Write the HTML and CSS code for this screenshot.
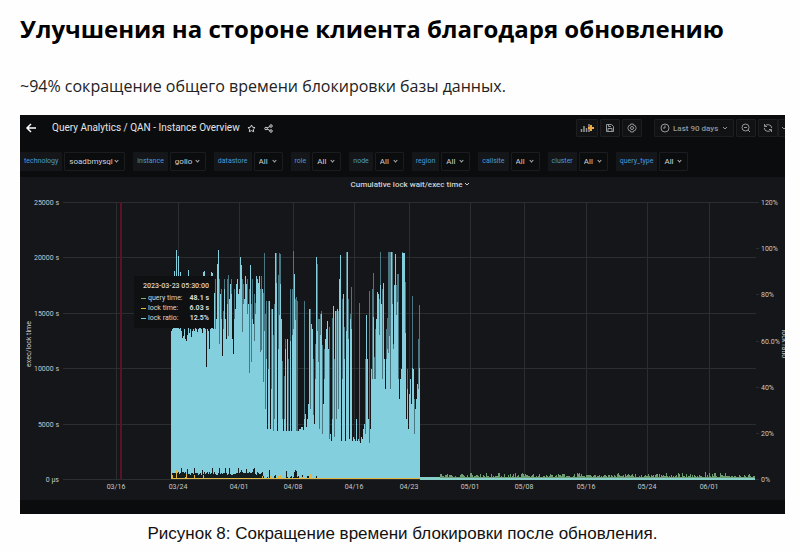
FILE: index.html
```html
<!DOCTYPE html>
<html lang="ru">
<head>
    <meta charset="UTF-8">
    <title>Улучшения на стороне клиента</title>
    <link rel="stylesheet" href="styles.css">
</head>
<body>
    <h1>Улучшения на стороне клиента благодаря обновлению</h1>
    <p class="lead">~94% сокращение общего времени блокировки базы данных.</p>

    <figure>
        <div class="dashboard">
            <div class="toolbar">
                <button class="icon-btn back" aria-label="Back">
                    <svg width="12" height="12" viewBox="0 0 12 12"><path d="M11 6H2M6 2L2 6l4 4" stroke-width="1.500"/></svg>
                </button>
                <h2>Query Analytics / QAN - Instance Overview</h2>
                <button class="icon-btn" aria-label="Star">
                    <svg width="9" height="9" viewBox="0 0 18 18"><path d="M9 2l2.200 4.500 4.900.7-3.500 3.400.8 4.900L9 13.200l-4.400 2.300.8-4.900L1.900 7.200l4.900-.7z" stroke-width="2"/></svg>
                </button>
                <button class="icon-btn" aria-label="Share">
                    <svg width="9" height="9" viewBox="0 0 18 18"><g stroke-width="2"><circle cx="4" cy="9" r="2.500"/><circle cx="14" cy="4" r="2.500"/><circle cx="14" cy="14" r="2.500"/><path d="M6 8l6-3M6 10l6 3"/></g></svg>
                </button>
                <div class="tools">
                    <button class="tool add" aria-label="Add panel">
                        <svg width="14" height="10" viewBox="0 0 14 10"><path d="M1.500 9V6M4 9V3M6.500 9V5M9 9V1" stroke-width="1.500"/><path d="M11 2v6M8 5h6" stroke="#f2a93b" stroke-width="2"/></svg>
                    </button>
                    <button class="tool" aria-label="Save">
                        <svg width="10" height="10" viewBox="0 0 20 20"><g stroke-width="2"><path d="M3 3h10l4 4v10H3z"/><path d="M6 17v-6h8v6M7 3v4h5"/></g></svg>
                    </button>
                    <button class="tool" aria-label="Settings">
                        <svg width="10" height="10" viewBox="0 0 20 20"><g stroke-width="2"><path d="M7.500 2h5l1 2.500 2.700.5L18 9v2l-1.800 4-2.700.5-1 2.500h-5l-1-2.500-2.700-.5L2 11V9l1.800-4 2.700-.5z"/><circle cx="10" cy="10" r="3"/></g></svg>
                    </button>
                    <button class="tool range">
                        <svg width="10" height="10" viewBox="0 0 20 20"><g stroke-width="2"><circle cx="10" cy="10" r="8"/><path d="M10 5v5H6"/></g></svg>
                        Last 90 days
                        <svg class="end" width="6" height="6" viewBox="0 0 6 6"><path d="M1 2l2 2 2-2"/></svg>
                    </button>
                    <button class="tool" aria-label="Zoom out">
                        <svg width="10" height="10" viewBox="0 0 20 20"><g stroke-width="2"><circle cx="9" cy="9" r="7"/><path d="M6 9h6M14 14l4 4"/></g></svg>
                    </button>
                    <button class="tool" aria-label="Refresh">
                        <svg width="10" height="10" viewBox="0 0 20 20"><g stroke-width="2"><path d="M3 2v5h5M17 18v-5h-5"/><path d="M3.500 7A7.500 7.500 0 0 1 17.500 10M16.500 13A7.500 7.500 0 0 1 2.500 10"/></g></svg>
                    </button>
                    <button class="tool cut" aria-label="Refresh interval"><svg width="6" height="6" viewBox="0 0 6 6"><path d="M3 2l2 2 2-2"/></svg></button>
                </div>
            </div>

            <form class="variables">
                <div class="variable"><label for="technology">technology</label><select id="technology" class="wide"><option>soadbmysql</option></select></div>
                <div class="variable"><label for="instance">instance</label><select id="instance" class="medium"><option>gollo</option></select></div>
                <div class="variable"><label for="datastore">datastore</label><select id="datastore"><option>All</option></select></div>
                <div class="variable"><label for="role">role</label><select id="role"><option>All</option></select></div>
                <div class="variable"><label for="node">node</label><select id="node"><option>All</option></select></div>
                <div class="variable"><label for="region">region</label><select id="region"><option>All</option></select></div>
                <div class="variable"><label for="callsite">callsite</label><select id="callsite"><option>All</option></select></div>
                <div class="variable"><label for="cluster">cluster</label><select id="cluster"><option>All</option></select></div>
                <div class="variable"><label for="query_type">query_type</label><select id="query_type"><option>All</option></select></div>
            </form>

            <div class="panel">
                <h3>Cumulative lock wait/exec time <svg width="6" height="6" viewBox="0 0 6 6"><path d="M1 2l2 2 2-2"/></svg></h3>
                <svg class="chart" viewBox="0 0 765 308">
                    <g id="grid"></g>
                    <path class="annotation" d="M101 10V287"/>
                    <g transform="translate(151 10)">
                        <path id="ratio-dim"/>
                        <path id="ratio"/>
                        <path id="query"/>
                        <path id="lock"/>
                        <path id="tail-green"/>
                        <path id="tail"/>
                    </g>
                    <g id="axis"></g>
                    <text class="axis-name" transform="translate(11 152) rotate(-90)">exec/lock time</text>
                    <text class="axis-name" transform="translate(762 152) rotate(90)">lock ratio</text>
                </svg>
                <div class="tooltip">
                    <strong>2023-03-23 05:30:00</strong>
                    <div class="row"><i class="key query"></i>query time:<b>48.1 s</b></div>
                    <div class="row"><i class="key lock"></i>lock time:<b>6.03 s</b></div>
                    <div class="row"><i class="key ratio"></i>lock ratio:<b>12.5%</b></div>
                </div>
            </div>
        </div>
        <figcaption>Рисунок 8: Сокращение времени блокировки после обновления.</figcaption>
    </figure>

    <script src="chart.js"></script>
</body>
</html>
```
FILE: styles.css
```css
body {
    margin: 0;
    padding: 12px 15px 0 20px;
    background-color: #fefefe;
    color: #000;
    font-family: "Open Sans", "Noto Sans", sans-serif;
}
h1 {
    margin: 0;
    font-size: 24px;
    line-height: 34px;
    font-weight: 700;
    white-space: nowrap;
}
.lead {
    margin: 28px 0 17px;
    font-size: 16px;
    line-height: 24px;
    color: #222;
}
figure {
    margin: 0;
}
figcaption {
    margin-top: 8px;
    text-align: center;
    font-family: "Liberation Sans", Arial, sans-serif;
    font-size: 17px;
    line-height: 24px;
    color: #111;
}
.dashboard {
    overflow: hidden;
    padding-bottom: 14px;
    background-color: #0b0c0e;
    color: #d0d1d3;
    font-family: Roboto, sans-serif;
}
.dashboard button,
.dashboard select {
    font-family: inherit;
    color: inherit;
}
.dashboard svg {
    fill: none;
    stroke: currentColor;
}
.toolbar {
    display: flex;
    align-items: center;
    padding: 4px 0 4px 5px;
    height: 18px;
}
.toolbar h2 {
    margin: 0 3px 0 15px;
    font-size: 10px;
    line-height: 18px;
    font-weight: 400;
    color: #e4e5e7;
    white-space: nowrap;
}
.icon-btn {
    display: flex;
    padding: 0;
    margin-left: 4px;
    border: 0;
    background: none;
}
.icon-btn + .icon-btn {
    margin-left: 8px;
}
.icon-btn.back {
    margin: 0;
    color: #fff;
}
.tools {
    display: flex;
    gap: 2px;
    margin-left: auto;
}
.tool {
    display: flex;
    align-items: center;
    justify-content: center;
    box-sizing: border-box;
    width: 20px;
    height: 18px;
    padding: 0;
    border: 1px solid #1c1e21;
    border-radius: 1px;
    background-color: #101214;
    font-size: 8px;
}
.tools .tool {
    color: #94969a;
}
.tool.add {
    width: 22px;
}
.tool.range {
    justify-content: flex-start;
    gap: 3px;
    width: 80px;
    margin-left: 10px;
    padding: 0 5px;
    font-weight: 500;
}
.range .end {
    margin-left: auto;
}
.tool.cut {
    width: 7px;
    margin-left: -2px;
    border-right: 0;
    overflow: hidden;
}
.variables {
    display: flex;
    gap: 8px;
    padding: 11px 0 6px;
}
.variable {
    position: relative;
    display: flex;
    gap: 2px;
}
.variable::after {
    content: "";
    position: absolute;
    right: 7px;
    top: 7px;
    width: 2px;
    height: 2px;
    border: solid #b0b1b3;
    border-width: 0 1px 1px 0;
    transform: rotate(45deg);
}
.variable label {
    padding: 0 4px;
    background-color: #141619;
    color: #4a9bd6;
    font-size: 7px;
    line-height: 19px;
}
.variable select {
    appearance: none;
    box-sizing: border-box;
    width: 29px;
    height: 19px;
    padding: 0 4px;
    border: 1px solid #1a1c1f;
    border-radius: 1px;
    background: #0b0c0e;
    font-size: 8px;
}
.variable select.medium {
    width: 36px;
}
.variable select.wide {
    width: 61px;
}
.panel {
    position: relative;
    background-color: #141619;
}
.panel h3 {
    margin: 0;
    padding-left: 16px;
    font-size: 8px;
    line-height: 15px;
    font-weight: 500;
    text-align: center;
}
.chart {
    display: block;
    width: 100%;
}
.chart text {
    fill: #c8c9cb;
    stroke: none;
    font-size: 7px;
}
.chart .axis-name {
    text-anchor: middle;
}
.chart .left {
    text-anchor: end;
}
.chart .bottom {
    text-anchor: middle;
}
#grid {
    stroke: #2a2e30;
}
.annotation {
    stroke: #5c1226;
    stroke-width: 2px;
}
#ratio-dim {
    fill: #4b7782;
    stroke: none;
}
#ratio {
    fill: #84cfde;
    stroke: none;
}
#query {
    fill: #141d20;
    stroke: none;
}
#lock {
    fill: #e0b743;
    stroke: none;
}
#tail-green {
    fill: #6c9c70;
    stroke: none;
}
#tail {
    fill: #86cfc9;
    stroke: none;
}
.tooltip {
    position: absolute;
    left: 114px;
    top: 99px;
    box-sizing: border-box;
    width: 80px;
    padding: 5px 5px 5px 7px;
    background-color: #0f1012;
    color: #d8d9da;
    font-size: 7px;
    line-height: 10px;
}
.tooltip strong {
    display: block;
    padding-left: 2px;
    margin-bottom: 2px;
    font-weight: 500;
    white-space: nowrap;
}
.row {
    display: flex;
    align-items: center;
}
.row b {
    margin-left: auto;
    font-weight: 700;
}
.key {
    width: 5px;
    height: 1px;
    margin-right: 2px;
}
.key.query {
    background-color: #7eb26d;
}
.key.lock {
    background-color: #eab839;
}
.key.ratio {
    background-color: #6ed0e0;
}
```
FILE: chart.js
```js
const BASE = 277;

// lock ratio, one value per column
const ratio = [
    148, 150, 152, 208, 151, 229, 152, 223, 150, 207, 148, 141, 143, 150, 140, 138, 144, 209, 146, 150,
    142, 148, 150, 148, 152, 150, 147, 150, 152, 151, 150, 146, 207, 208, 150, 112, 150, 148, 130, 150,
    207, 206, 150, 186, 150, 160, 215, 229, 200, 185, 160, 123, 150, 190, 160, 140, 175, 204, 180, 195,
    185, 140, 125, 160, 170, 195, 200, 185, 190, 222, 214, 200, 175, 180, 203, 195, 165, 175, 170, 214,
    175, 160, 155, 160, 165, 203, 200, 196, 203, 190, 203, 190, 160, 226, 70, 120, 50, 110, 178, 50,
    90, 170, 48, 60, 226, 226, 48, 130, 226, 225, 160, 60, 48, 60, 130, 48, 140, 48, 48, 190,
    48, 160, 228, 205, 180, 48, 48, 48, 50, 50, 52, 52, 49, 60, 65, 52, 60, 75, 170, 70,
    155, 150, 64, 55, 100, 222, 215, 160, 50, 165, 165, 45, 75, 100, 140, 150, 158, 130, 40, 45,
    38, 60, 173, 42, 168, 60, 170, 70, 200, 224, 38, 100, 185, 120, 38, 227, 227, 140, 40, 160,
    150, 38, 42, 40, 38, 60, 38, 40, 38, 36, 42, 40, 50, 55, 45, 164, 120, 60, 36, 50,
    110, 100, 194, 100, 100, 160, 187, 185, 180, 227, 175, 100, 196, 120, 90, 120, 130, 190, 227, 90,
    227, 227, 130, 194, 225, 194, 205, 100, 80, 100, 110, 226, 226, 226, 180, 60, 90, 50, 85, 100,
    75, 183, 110, 45, 70, 80, 95, 90, 174
];

// half-bright spikes behind the series: [column, height]
const spikes = [
    [44, 200], [50, 190], [53, 200], [56, 200], [60, 200], [63, 190], [72, 195], [76, 200], [78, 190],
    [81, 200], [83, 185], [92, 182], [94, 165], [95, 178], [97, 178], [100, 170], [103, 155], [107, 150],
    [111, 118], [114, 140], [117, 110], [121, 190], [125, 182], [126, 178], [133, 178], [139, 170],
    [142, 120], [148, 160], [150, 168], [153, 130], [158, 152], [163, 120], [165, 168], [167, 168],
    [171, 180], [173, 152], [177, 160], [179, 165], [180, 192], [188, 176], [194, 120], [198, 188],
    [201, 190], [202, 206], [204, 150], [209, 196], [211, 190], [213, 120], [215, 150], [217, 227],
    [219, 227], [223, 190], [226, 150], [227, 205], [231, 227], [234, 197], [236, 110], [239, 90],
    [241, 160], [243, 80]
];

function bar(x, top, bottom) {
    return `M${x} ${bottom}V${top}h1V${bottom}z`;
}

function setPath(id, d) {
    document.getElementById(id).setAttribute('d', d);
}

let seed = 7;
function random() {
    seed = (seed * 16807) % 2147483647;
    return seed / 2147483647;
}

for (let x = 44; x < 249; x++) {
    // soft shoulders next to the tall columns
    const next = Math.max(ratio[x - 1], ratio[x + 1] || 0);
    if (next > 120 && random() > 0.6) {
        spikes.push([x, Math.round(next * (0.6 + random() * 0.35))]);
    }
    // thin peaks fade towards the top
    if (ratio[x] > 150 && random() > (x < 92 ? 0.8 : 0.6)) {
        spikes.push([x, ratio[x]]);
        ratio[x] = Math.round(ratio[x] * (0.6 + random() * 0.3));
    }
}

setPath('ratio', ratio.map((h, x) => bar(x, BASE - h, BASE)).join(''));
setPath('ratio-dim', spikes.map(([x, h]) => bar(x, BASE - h, BASE)).join(''));

let query = '';
let lock = 'M0 276h249v1H0z';
for (let x = 1; x < 150; x++) {
    const busy = x < 92;
    const peak = random() > 0.85 ? 5 : 0;
    if (busy || random() > 0.55) {
        query += bar(x, BASE - 2 - Math.round(random() * 3 + peak) - (busy ? 2 : -1), BASE - 1);
    }
    if (random() > 0.9) {
        lock += bar(x, BASE - 2 - Math.round(random() * 3), BASE);
    }
}
lock += bar(5, BASE - 9, BASE);
setPath('query', query);
setPath('lock', lock);

let green = '';
for (let x = 268; x < 584; x++) {
    green += bar(x, BASE - 2 - Math.round(random() * random() * 5), BASE);
}
setPath('tail-green', green);
setPath('tail', 'M249 275h20v1h315v2H249z');

// grid and axis labels
const days = [
    [96, '03/16'], [158, '03/24'], [219, '04/01'], [273, '04/08'], [334, '04/16'], [389, '04/23'],
    [450, '05/01'], [504, '05/08'], [566, '05/16'], [627, '05/24'], [689, '06/01']
];
const times = ['25000 s', '20000 s', '15000 s', '10000 s', '5000 s', '0 μs'];
const percents = ['120%', '100%', '80%', '60.0%', '40%', '20%', '0%'];

let grid = '';
let axis = '';
days.forEach(([x, label]) => {
    grid += `<path d="M${x}.5 10V287"/>`;
    axis += `<text class="bottom" x="${x}" y="297">${label}</text>`;
});
times.forEach((label, i) => {
    const y = Math.round(10 + i * BASE / 5);
    grid += `<path d="M43 ${y}.5H736"/>`;
    axis += `<text class="left" x="39" y="${y + 3}">${label}</text>`;
});
percents.forEach((label, i) => {
    const y = Math.round(10 + i * BASE / 6);
    grid += `<path d="M736 ${y}.5h3"/>`;
    axis += `<text x="741" y="${y + 3}">${label}</text>`;
});
document.getElementById('grid').innerHTML = grid;
document.getElementById('axis').innerHTML = axis;
```
